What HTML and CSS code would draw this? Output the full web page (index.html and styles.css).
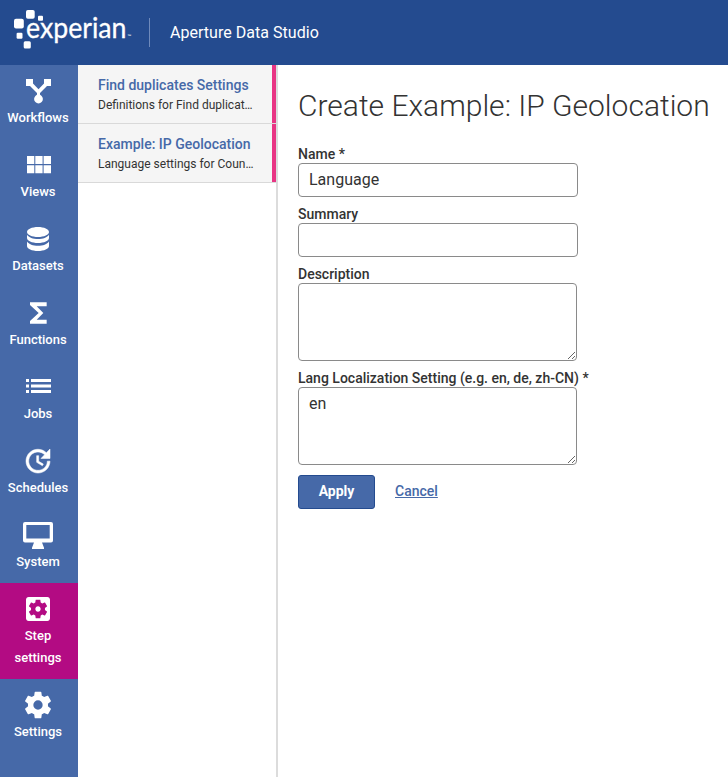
FILE: index.html
```html
<!DOCTYPE html>
<html lang="en">
<head>
<meta charset="utf-8">
<title>Aperture Data Studio</title>
<link rel="stylesheet" href="styles.css">
</head>
<body>
<header class="topbar">
  <svg class="logo" viewBox="0 0 135 65" role="img" aria-label="Experian">
    <rect x="26" y="10" width="8.7" height="8.7" rx="1.8"/>
    <rect x="38" y="15.7" width="5" height="5" rx="1"/>
    <rect x="14" y="18.7" width="9.8" height="9.8" rx="2"/>
    <rect x="16.6" y="32.8" width="5.900" height="5.900" rx="1.2"/>
    <rect x="23.7" y="41.2" width="7.1" height="7.2" rx="1.5"/>
    <text class="wordmark" x="26" y="37.500" textLength="100.500" lengthAdjust="spacingAndGlyphs">experian</text>
    <text class="tm" x="127.500" y="38">™</text>
  </svg>
  <span class="divider"></span>
  <span class="product">Aperture Data Studio</span>
</header>
<div class="shell">
  <nav class="nav">
    <a class="nav-item"><svg viewBox="0 0 32 32"><path d="M4 4h7v4.600l5.500 5.700L22 8.600V4h7v7h-4l-7 7v3.200h-3V18l-7-7H4z"/><circle cx="16.500" cy="24" r="4.400"/></svg><span>Workflows</span></a>
    <a class="nav-item"><svg viewBox="0 0 32 32"><path d="M5 7h7.300v8H5zM13.300 7h7.300v8h-7.300zM21.600 7H29v8h-7.400zM5 16.200h7.300v8H5zM13.300 16.200h7.300v8h-7.300zM21.600 16.200H29v8h-7.400z"/></svg><span>Views</span></a>
    <a class="nav-item"><svg viewBox="0 0 32 32"><path d="M16 4c6.100 0 11 2.200 11 5s-4.900 5-11 5S5 11.800 5 9s4.900-5 11-5zM5 11.700c1.800 2.800 6 4.300 11 4.300s9.200-1.500 11-4.300V15c0 2.800-4.900 5-11 5S5 17.800 5 15zM5 18.500c1.800 2.800 6 4.300 11 4.300s9.200-1.500 11-4.300V23c0 2.800-4.900 5-11 5S5 25.800 5 23z"/></svg><span>Datasets</span></a>
    <a class="nav-item"><svg viewBox="0 0 24 24"><path d="M18.500 4H6v2l6.500 6L6 18v2h12.500v-3H11l5-5-5-5h7.500z"/></svg><span>Functions</span></a>
    <a class="nav-item"><svg viewBox="0 0 32 32"><path d="M4 8h3v3H4zM4 13.500h3v3H4zM4 19h3v3H4zM9 8h20v3H9zM9 13.500h20v3H9zM9 19h20v3H9z"/></svg><span>Jobs</span></a>
    <a class="nav-item"><svg class="bold" viewBox="0 0 24 24"><path d="M21 10.120h-6.780l2.740-2.820c-2.730-2.700-7.150-2.800-9.880-.1-2.730 2.710-2.730 7.080 0 9.790s7.150 2.710 9.880 0C18.320 15.650 19 14.080 19 12.100h2c0 1.980-.88 4.550-2.640 6.290-3.510 3.480-9.210 3.480-12.720 0-3.500-3.470-3.530-9.110-.02-12.580s9.140-3.470 12.650 0L21 3v7.120zM12.500 8v4.250l3.500 2.080-.72 1.210L11 13V8h1.500z"/></svg><span>Schedules</span></a>
    <a class="nav-item"><svg viewBox="0 0 32 32"><path fill-rule="evenodd" d="M3 3h26q2 0 2 2v16.500q0 2-2 2h-9l2 5.200V30H10v-1.300l2-5.200H3q-2 0-2-2V5q0-2 2-2zM4.300 6v13.400h23.400V6z"/></svg><span>System</span></a>
    <a class="nav-item active"><svg viewBox="0 0 24 24"><path d="M12 10c-1.100 0-2 .9-2 2s.9 2 2 2 2-.9 2-2-.9-2-2-2zm7-7H5c-1.110 0-2 .9-2 2v14c0 1.100.89 2 2 2h14c1.110 0 2-.9 2-2V5c0-1.100-.89-2-2-2zm-1.750 9c0 .23-.02.46-.05.68l1.480 1.160c.13.11.17.3.08.45l-1.400 2.420c-.09.15-.27.21-.43.15l-1.740-.7c-.36.28-.76.51-1.180.69l-.26 1.850c-.03.17-.18.3-.35.3h-2.800c-.17 0-.32-.13-.35-.29l-.26-1.850c-.43-.18-.82-.41-1.180-.69l-1.740.7c-.16.06-.34 0-.43-.15l-1.400-2.420c-.09-.15-.05-.34.08-.45l1.480-1.160c-.03-.23-.05-.46-.05-.69 0-.23.02-.46.05-.68l-1.480-1.160c-.13-.11-.17-.3-.08-.45l1.400-2.420c.09-.15.27-.21.43-.15l1.740.7c.36-.28.76-.51 1.180-.69l.26-1.850c.03-.17.18-.3.35-.3h2.800c.17 0 .32.13.35.29l.26 1.850c.43.18.82.41 1.180.69l1.740-.7c.16-.06.34 0 .43.15l1.400 2.420c.09.15.05.34-.08.45l-1.480 1.160c.03.23.05.46.05.69z"/></svg><span>Step settings</span></a>
    <a class="nav-item"><svg viewBox="0 0 24 24"><path d="M12 15.500A3.500 3.500 0 0 1 8.500 12 3.500 3.500 0 0 1 12 8.500a3.500 3.500 0 0 1 3.500 3.500 3.500 3.500 0 0 1-3.500 3.500m7.430-2.530c.04-.32.07-.64.07-.97s-.03-.66-.07-1l2.110-1.630c.19-.15.24-.42.12-.64l-2-3.460c-.12-.22-.39-.31-.61-.22l-2.490 1c-.52-.39-1.060-.73-1.690-.98l-.37-2.650A.506.506 0 0 0 14 2h-4c-.25 0-.46.18-.5.42l-.37 2.650c-.63.25-1.170.59-1.690.98l-2.490-1c-.22-.09-.49 0-.61.22l-2 3.460c-.13.22-.07.49.12.64L4.570 11c-.04.34-.07.67-.07 1s.03.65.07.97l-2.110 1.660c-.19.15-.25.42-.12.64l2 3.460c.12.22.39.3.61.22l2.490-1.010c.52.4 1.060.74 1.690.99l.37 2.650c.04.24.25.42.5.42h4c.25 0 .46-.18.5-.42l.37-2.650c.63-.26 1.170-.59 1.690-.99l2.490 1.010c.22.08.49 0 .61-.22l2-3.460c.12-.22.07-.49-.12-.64z"/></svg><span>Settings</span></a>
  </nav>
  <aside class="list">
    <a class="list-item"><strong>Find duplicates Settings</strong><span>Definitions for Find duplicat…</span></a>
    <a class="list-item"><strong>Example: IP Geolocation</strong><span>Language settings for Coun…</span></a>
  </aside>
  <main class="content">
    <h1>Create Example: IP Geolocation</h1>
    <form>
      <div class="field"><label for="name">Name *</label><input id="name" type="text" value="Language"></div>
      <div class="field"><label for="summary">Summary</label><input id="summary" type="text"></div>
      <div class="field"><label for="description">Description</label><textarea id="description"></textarea></div>
      <div class="field"><label for="lang">Lang Localization Setting (e.g. en, de, zh-CN) *</label><textarea id="lang">en</textarea></div>
      <div class="actions"><button type="button">Apply</button><a class="cancel">Cancel</a></div>
    </form>
  </main>
</div>
</body>
</html>
```
FILE: styles.css
```css
* { box-sizing: border-box; }
body {
  margin: 0;
  height: 777px;
  display: flex;
  flex-direction: column;
  overflow: hidden;
  background: #fff;
  color: #333;
  font-family: Roboto, "Liberation Sans", sans-serif;
}
.topbar {
  height: 65px;
  flex: none;
  display: flex;
  align-items: center;
  background: #244b8f;
  color: #fff;
}
.logo { width: 135px; height: 65px; fill: #fff; }
.wordmark { font: 400 28px Lato, sans-serif; stroke: #fff; stroke-width: .3px; }
.tm { font: 400 5px Lato, sans-serif; }
.divider { width: 1px; height: 29px; margin: 0 20px 0 14px; background: #6f8abb; }
.product { font-size: 16px; font-weight: 400; letter-spacing: .03px; }
.shell { flex: 1; display: flex; min-height: 0; }
.nav { width: 78px; flex: none; background: #4669a8; color: #fff; }
.nav-item {
  display: flex;
  flex-direction: column;
  align-items: center;
  padding: 10px 2px 10px 0;
  font-size: 13px;
  font-weight: 500;
  line-height: 22px;
  text-align: center;
}
.nav-item svg { width: 32px; height: 32px; fill: currentColor; }
.nav-item svg.bold { stroke: currentColor; stroke-width: .4px; }
.nav-item span { max-width: 64px; }
.nav-item.active { background: #b30b83; }
.list { width: 200px; flex: none; border-right: 2px solid #dcdcdc; }
.list-item {
  display: block;
  height: 59px;
  padding: 10px 0 0 20px;
  background: linear-gradient(#e83584, #e83584) right top / 4px 58px no-repeat #f5f5f5;
  border-bottom: 1px solid #d9d9d9;
}
.list-item strong { display: block; font-size: 14px; font-weight: 500; line-height: 20px; color: #4669a8; }
.list-item span { display: block; font-size: 12px; line-height: 20px; white-space: nowrap; }
.content { flex: 1; min-width: 0; padding: 21px 0 0 20px; }
h1 { margin: 0; font-size: 30px; font-weight: 300; line-height: 40px; white-space: nowrap; }
form { margin-top: 19px; }
.field { margin-bottom: 8px; }
label { display: block; font-size: 14px; font-weight: 500; line-height: 18px; }
input, textarea {
  display: block;
  margin: 0;
  padding: 5px 10px;
  border: 1px solid #8a8a8a;
  border-radius: 4px;
  background: #fff;
  color: #333;
  font: 400 16px/22px Roboto, sans-serif;
}
input { width: 280px; height: 34px; padding: 4px 10px 6px; }
textarea { width: 279px; height: 78px; }
.actions { display: flex; align-items: center; margin-top: 10px; }
button {
  width: 77px;
  height: 34px;
  padding: 0 0 2px;
  border: 1px solid #244b8f;
  border-radius: 3px;
  background: #4669a8;
  color: #fff;
  font: 700 14px Roboto, sans-serif;
}
.cancel { margin-left: 20px; padding-bottom: 2px; font-size: 14px; font-weight: 500; color: #4669a8; text-decoration: underline; }
```
